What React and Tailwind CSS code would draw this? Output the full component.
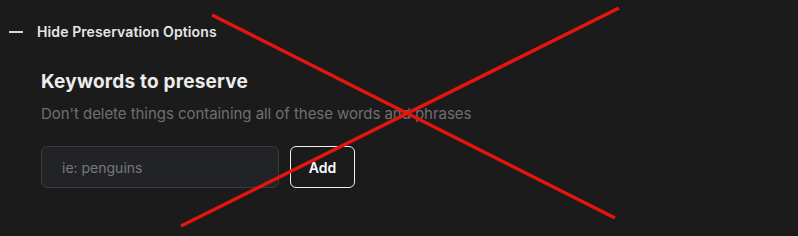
import React from "react";

export default function App() {
  return (
    <div className="relative w-[798px] h-[236px] overflow-hidden bg-[#1b1b1c] text-[#e8e8e8]" style={{ fontFamily: "Inter, 'Noto Sans', sans-serif" }}>
      {/* Toggle */}
      <button className="flex items-center gap-[14px] pl-[9px] pt-[22px] h-[42px]">
        <span className="block w-[14px] h-[2px] bg-[#d8d8d8]"></span>
        <span className="text-[14px] font-semibold leading-[20px] text-[#e6e6e6] tracking-[0.1px]">Hide Preservation Options</span>
      </button>

      {/* Preservation options */}
      <div className="pl-[41px] pt-[28px]">
        <h3 className="text-[19px] font-bold leading-[24px] tracking-[0.2px] text-[#ececec]">Keywords to preserve</h3>
        <p className="mt-[10px] text-[15px] leading-[20px] tracking-[-0.05px] text-[#6f6f72]">Don't delete things containing all of these words and phrases</p>
        <div className="mt-[22px] flex gap-[11px]">
          <input
            type="text"
            placeholder="ie: penguins"
            className="w-[238px] h-[42px] rounded-[6px] border border-[#3a3b40] bg-[#222327] px-[20px] text-[14px] text-[#e0e0e0] placeholder:text-[#77787c] outline-none"
          />
          <button className="w-[65px] h-[42px] rounded-[6px] border border-[#f0f0f0] text-[14px] font-semibold text-white">Add</button>
        </div>
      </div>

      {/* Red X overlay */}
      <svg className="absolute inset-0 pointer-events-none" width="798" height="236" viewBox="0 0 798 236">
        <line x1="212" y1="15" x2="615" y2="218" stroke="#e3150d" strokeWidth="3.5" />
        <line x1="619" y1="8" x2="181" y2="226" stroke="#e3150d" strokeWidth="3.5" />
      </svg>
    </div>
  );
}
